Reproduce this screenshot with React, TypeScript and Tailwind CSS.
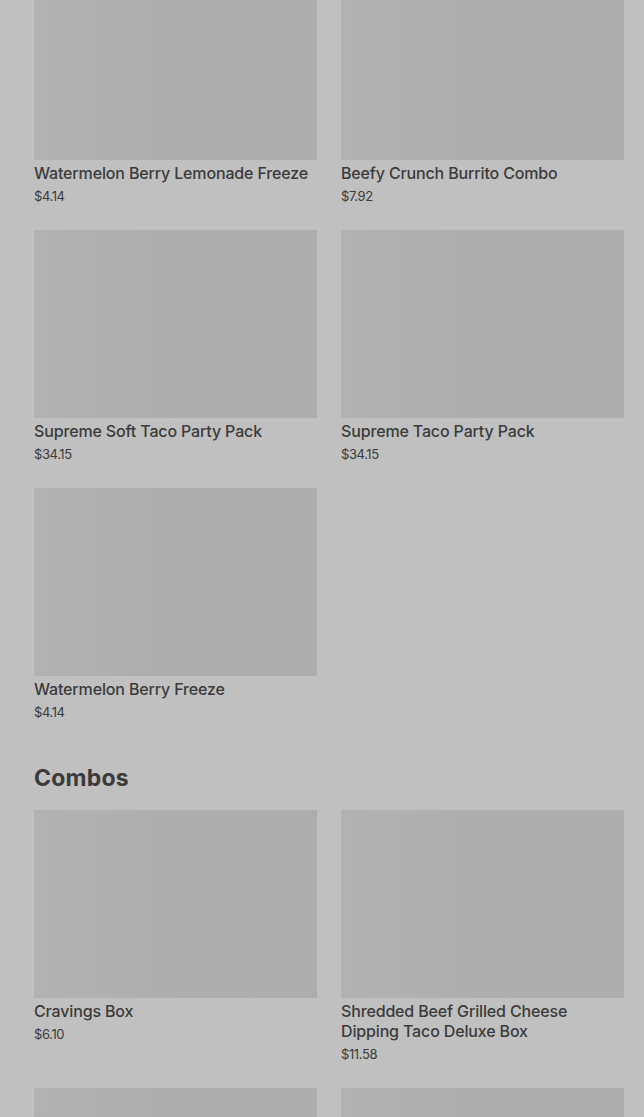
import React from 'react';

interface Item {
  name?: string;
  price?: string;
}

const sectionOne: Item[] = [
  { name: 'Watermelon Berry Lemonade Freeze', price: '$4.14' },
  { name: 'Beefy Crunch Burrito Combo', price: '$7.92' },
  { name: 'Supreme Soft Taco Party Pack', price: '$34.15' },
  { name: 'Supreme Taco Party Pack', price: '$34.15' },
  { name: 'Watermelon Berry Freeze', price: '$4.14' },
];

// last row is only partly on screen, titles fall below the fold
const combos: Item[] = [
  { name: 'Cravings Box', price: '$6.10' },
  { name: 'Shredded Beef Grilled Cheese Dipping Taco Deluxe Box', price: '$11.58' },
  {},
  {},
];

function ProductCard({ item }: { item: Item }) {
  return (
    <div className="flex flex-col">
      <div className="h-[188px] w-full bg-gradient-to-r from-[#b2b2b2] via-[#adadad] to-[#adadad]" />
      {item.name && (
        <h3 className="mt-[3px] text-[16px] font-medium leading-[20px] tracking-[-0.15px] text-[#3b3b3b]">
          {item.name}
        </h3>
      )}
      {item.price && (
        <p className="mt-1 text-[13px] leading-[18px] tracking-[-0.4px] text-[#3b3b3b]">{item.price}</p>
      )}
    </div>
  );
}

function ProductGrid({ items }: { items: Item[] }) {
  return (
    <div className="grid grid-cols-2 gap-x-6 gap-y-[25px]">
      {items.map((item, i) => (
        <ProductCard key={i} item={item} />
      ))}
    </div>
  );
}

export default function App() {
  return (
    <div
      className="h-[1117px] overflow-hidden bg-[#c0c0c0]"
      style={{ fontFamily: 'Inter, "Noto Sans", Arial, sans-serif' }}
    >
      <div className="mt-[-28px] pl-[34px] pr-[20px]">
        <ProductGrid items={sectionOne} />

        <h2 className="mt-[43px] mb-[18px] text-[23px] font-bold leading-[28px] tracking-[0.2px] text-[#3b3b3b]">
          Combos
        </h2>
        <ProductGrid items={combos} />
      </div>
    </div>
  );
}
